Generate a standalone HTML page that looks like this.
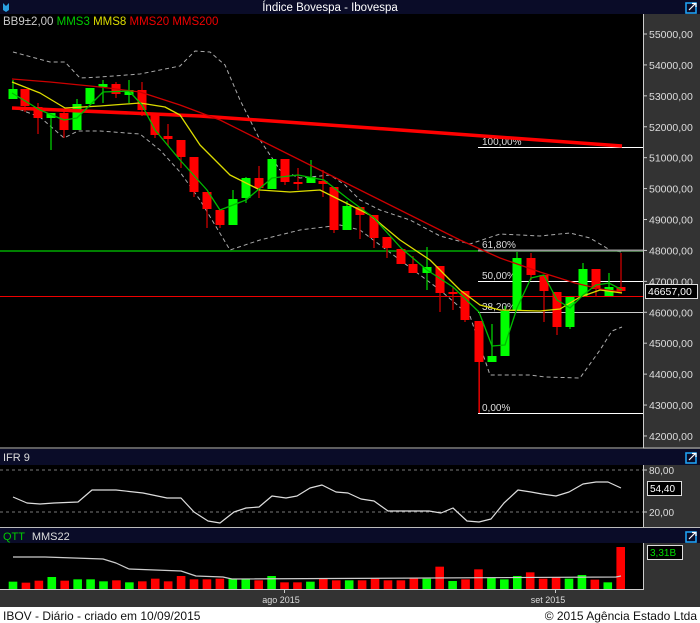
<!DOCTYPE html>
<html><head><meta charset="utf-8"><style>
html,body{margin:0;padding:0;background:#000;width:700px;height:623px;overflow:hidden}
svg{display:block;font-family:"Liberation Sans",sans-serif}
</style></head><body>
<svg id="s" width="700" height="623" viewBox="0 0 700 623" xmlns="http://www.w3.org/2000/svg">
<rect width="700" height="623" fill="#000"/>
<rect x="643" y="14" width="57" height="593" fill="#333"/>
<rect x="0" y="589" width="700" height="18" fill="#333"/>
<rect x="0" y="0" width="700" height="14" fill="#0a0c28"/>
<text x="330" y="11" fill="#fff" font-size="11.5" text-anchor="middle">Índice Bovespa - Ibovespa</text>
<path d="M3 3 L3 10 L6 12 L9 10 L9 3 L6 6 Z" fill="#2aa0e0"/>
<g><rect x="686" y="3" width="10" height="10" fill="none" stroke="#1ea0f0" stroke-width="1.6"/><path d="M689 10 L695 4 M692 3.5 L696 3.5 L696 7" stroke="#fff" stroke-width="1.2" fill="none"/></g>
<text x="3" y="25" font-size="11.5" fill="#ccc">BB9±2,00 <tspan fill="#0c0">MMS3</tspan> <tspan fill="#dd0">MMS8</tspan> <tspan fill="#e00">MMS20</tspan> <tspan fill="#e00">MMS200</tspan></text>
<g id="main"></g>
<rect x="0" y="449" width="700" height="16" fill="#0a0c28"/>
<text x="3" y="461" font-size="11" fill="#ddd">IFR 9</text>
<rect x="0" y="528" width="700" height="15" fill="#0a0c28"/>
<text x="3" y="540" font-size="11" fill="#0c0">QTT <tspan fill="#ddd" dx="4">MMS22</tspan></text>
<g transform="translate(0,450)"><rect x="686" y="3" width="10" height="10" fill="none" stroke="#1ea0f0" stroke-width="1.6"/><path d="M689 10 L695 4 M692 3.5 L696 3.5 L696 7" stroke="#fff" stroke-width="1.2" fill="none"/></g>
<g transform="translate(0,529)"><rect x="686" y="3" width="10" height="10" fill="none" stroke="#1ea0f0" stroke-width="1.6"/><path d="M689 10 L695 4 M692 3.5 L696 3.5 L696 7" stroke="#fff" stroke-width="1.2" fill="none"/></g>
<line x1="0" y1="448" x2="700" y2="448" stroke="#bbb"/>
<line x1="0" y1="527.5" x2="700" y2="527.5" stroke="#bbb"/>
<line x1="643.5" y1="14" x2="643.5" y2="448" stroke="#ccc"/>
<line x1="643.5" y1="465" x2="643.5" y2="527" stroke="#ccc"/>
<line x1="643.5" y1="543" x2="643.5" y2="589.5" stroke="#ccc"/>
<line x1="0" y1="589.5" x2="644" y2="589.5" stroke="#ccc"/>
<g id="ifr"></g>
<g id="vol"></g>
<text x="281" y="603" font-size="9" fill="#ddd" text-anchor="middle">ago 2015</text>
<text x="548" y="603" font-size="9" fill="#ddd" text-anchor="middle">set 2015</text>
<line x1="284.5" y1="589" x2="284.5" y2="593" stroke="#ccc"/>
<line x1="555.5" y1="589" x2="555.5" y2="593" stroke="#ccc"/>
<rect x="0" y="607" width="700" height="16" fill="#fff"/>
<text x="3" y="620" font-size="12" fill="#111">IBOV - Diário - criado em 10/09/2015</text>
<text x="697" y="620" font-size="12" fill="#111" text-anchor="end">© 2015 Agência Estado Ltda</text>
</svg>
<script>
var NS="http://www.w3.org/2000/svg";
function el(p,t,a,txt){var e=document.createElementNS(NS,t);for(var k in a)e.setAttribute(k,a[k]);if(txt!=null)e.textContent=txt;document.getElementById(p).appendChild(e);return e;}
function pl(p,pts,c,w,d){el(p,"polyline",{points:pts.map(function(q){return q.join(",")}).join(" "),fill:"none",stroke:c,"stroke-width":w,"stroke-dasharray":d||"none","stroke-linejoin":"round"});}
for(var i=0;i<14;i++){var v=55000-i*1000,y=34+i*30.92;el("main","line",{x1:643,y1:y,x2:647,y2:y,stroke:"#ccc"});el("main","text",{x:649,y:y+4,"font-size":10.5,fill:"#ddd"},v+",00");}
pl("main",[[13,52],[50,62],[65,62],[80,78],[100,77],[140,74],[180,66],[195,51],[210,52],[225,65],[240,100],[260,140],[280,170],[300,178],[330,175],[345,185],[360,200],[380,210],[410,220],[440,236],[470,244],[500,234],[540,236],[570,233],[590,238],[610,250],[622,252]],"#aaa",1,"4,3");
pl("main",[[13,107],[40,117],[64,138],[78,131],[100,131],[140,134],[160,150],[180,172],[200,200],[218,230],[230,250],[260,240],[300,230],[340,225],[360,230],[400,260],[440,290],[470,316],[490,375],[530,375],[545,377],[580,378],[600,350],[612,331],[622,327]],"#aaa",1,"4,3");
el("main","line",{x1:0,y1:251,x2:643,y2:251,stroke:"#0a0","stroke-width":1.5});
el("main","line",{x1:0,y1:296.5,x2:643,y2:296.5,stroke:"#e00"});
var fib=[[147,"100,00%","#fff"],[250,"61,80%","#999"],[281,"50,00%","#fff"],[312,"38,20%","#ccc"],[413,"0,00%","#fff"]];
fib.forEach(function(f){el("main","line",{x1:478,y1:f[0]+0.5,x2:643,y2:f[0]+0.5,stroke:f[2],"stroke-width":f[1]=="61,80%"?2:1});el("main","text",{x:482,y:f[0]-2,"font-size":10,fill:"#ddd"},f[1]);});
el("main","line",{x1:479.5,y1:360,x2:479.5,y2:413,stroke:"#e00"});
var C=[[13,99,89,80,99],[25,89,106,89,112],[38,107,118,103,134],[51,118,113,113,150],[64,113,130,110,138],[77,130,104,99,130],[90,104,88,88,104],[103,87,84,80,103],[116,84,94,82,98],[129,95,90,80,103],[142,90,110,82,116],[155,115,135,115,138],[168,136,139,124,146],[181,140,157,140,168],[194,157,192,157,197],[207,192,209,192,228],[220,210,225,210,228],[233,225,199,190,225],[246,198,178,177,203],[259,178,188,166,198],[272,189,159,159,189],[285,159,182,159,185],[298,182,184,168,190],[311,183,177,160,183],[323,181,184,170,197],[334,187,230,187,233],[347,230,206,201,230],[360,207,215,207,239],[374,215,238,215,248],[387,237,248,237,258],[401,249,264,249,258],[413,264,273,256,273],[427,273,267,247,290],[440,266,293,266,312],[453,292,292,287,310],[465,291,320,291,322],[479,321,362,321,413],[492,362,356,324,362],[505,356,311,306,356],[517,311,258,252,311],[531,258,275,253,280],[544,275,291,275,322],[557,292,327,292,335],[570,327,297,297,329],[583,296,269,263,296],[596,269,289,269,297],[609,296,287,273,296],[621,287,291,253,291]];
C.forEach(function(c){var up=c[2]<c[1],col=up?"#0f0":"#f00",t=Math.min(c[1],c[2]),b=Math.max(c[1],c[2]);
el("main","line",{x1:c[0],y1:c[3],x2:c[0],y2:c[4],stroke:up?"#0c0":"#c00","stroke-width":1.3});
el("main","rect",{x:c[0]-4.5,y:t,width:9,height:Math.max(b-t,2),fill:col});});
pl("main",[[12,108],[200,116],[400,130],[622,146]],"#f00",3.5);
pl("main",[[12,79],[50,82],[100,87],[140,92],[180,105],[220,120],[260,140],[300,160],[340,180],[380,200],[420,220],[460,240],[500,258],[540,272],[575,283],[600,289],[622,292]],"#c00",1.3);
pl("main",[[12,82],[40,93],[65,108],[100,106],[140,103],[165,107],[180,115],[200,145],[230,175],[260,190],[290,192],[320,190],[340,200],[370,215],[400,240],[430,260],[460,290],[480,305],[500,310],[540,311],[560,309],[580,297],[600,290],[622,293]],"#dd0",1.3);
pl("main",[[12,93],[40,110],[64,120],[77,118],[90,105],[103,92],[129,91],[142,105],[155,130],[180,160],[207,190],[220,210],[246,200],[272,178],[298,175],[324,180],[347,198],[374,218],[401,248],[427,270],[453,287],[479,312],[492,346],[505,345],[517,308],[531,278],[544,275],[557,300],[570,308],[583,295],[596,285],[609,283],[622,290]],"#0b0",1.3);
el("main","rect",{x:645.5,y:284.5,width:52,height:14,fill:"#000",stroke:"#ddd"});
el("main","text",{x:648,y:295,"font-size":10.5,fill:"#fff"},"46657,00");
el("ifr","line",{x1:0,y1:470,x2:643,y2:470,stroke:"#777","stroke-dasharray":"3,3"});
el("ifr","line",{x1:0,y1:512,x2:643,y2:512,stroke:"#777","stroke-dasharray":"3,3"});
[[470,"80,00"],[512,"20,00"]].forEach(function(a){el("ifr","line",{x1:643,y1:a[0],x2:647,y2:a[0],stroke:"#ccc"});el("ifr","text",{x:649,y:a[0]+4,"font-size":10,fill:"#ddd"},a[1]);});
pl("ifr",[[13,497],[27,503],[40,504],[54,503],[78,502],[92,490],[116,490],[143,493],[167,498],[181,498],[194,512],[208,521],[220,523],[234,512],[246,508],[259,507],[272,496],[286,498],[297,496],[310,488],[322,485],[336,492],[348,493],[361,499],[374,501],[388,511],[402,511],[415,511],[429,511],[441,513],[453,508],[467,521],[479,522],[491,519],[504,503],[518,490],[531,492],[542,494],[556,496],[569,492],[583,484],[596,482],[608,482],[621,488]],"#ddd",1.2);
el("ifr","rect",{x:647.5,y:481.5,width:34,height:14,fill:"#000",stroke:"#ddd"});
el("ifr","text",{x:650,y:492,"font-size":10,fill:"#fff"},"54,40");
var V=[[425,1],[428,0],[422,0],[411,1],[422,0],[418,1],[418,1],[424,1],[421,0],[427,1],[424,0],[416,0],[424,0],[408,0],[418,0],[418,0],[416,0],[416,1],[416,1],[421,0],[408,1],[427,0],[427,0],[425,1],[416,0],[421,0],[421,1],[421,0],[416,0],[421,0],[421,0],[414,0],[416,1],[380,0],[423,1],[418,0],[388,0],[414,1],[418,1],[408,1],[397,0],[416,0],[411,0],[416,1],[405,1],[419,0],[427,1],[321,0]];
V.forEach(function(v,i){var x=13+i*12.93,t=440+v[0]/3;el("vol","rect",{x:x-4.3,y:t,width:8.6,height:589-t,fill:v[1]?"#0f0":"#f00"});});
pl("vol",[[13,557],[45,557],[103,559],[116,563],[129,569],[181,571],[196,576],[223,577],[232,579],[616,577],[621,576]],"#ccc",1.2);
el("vol","rect",{x:647.5,y:545.5,width:35,height:14,fill:"#000",stroke:"#ddd"});
el("vol","text",{x:650,y:556,"font-size":10,fill:"#0d0"},"3,31B");
</script>
</body></html>
